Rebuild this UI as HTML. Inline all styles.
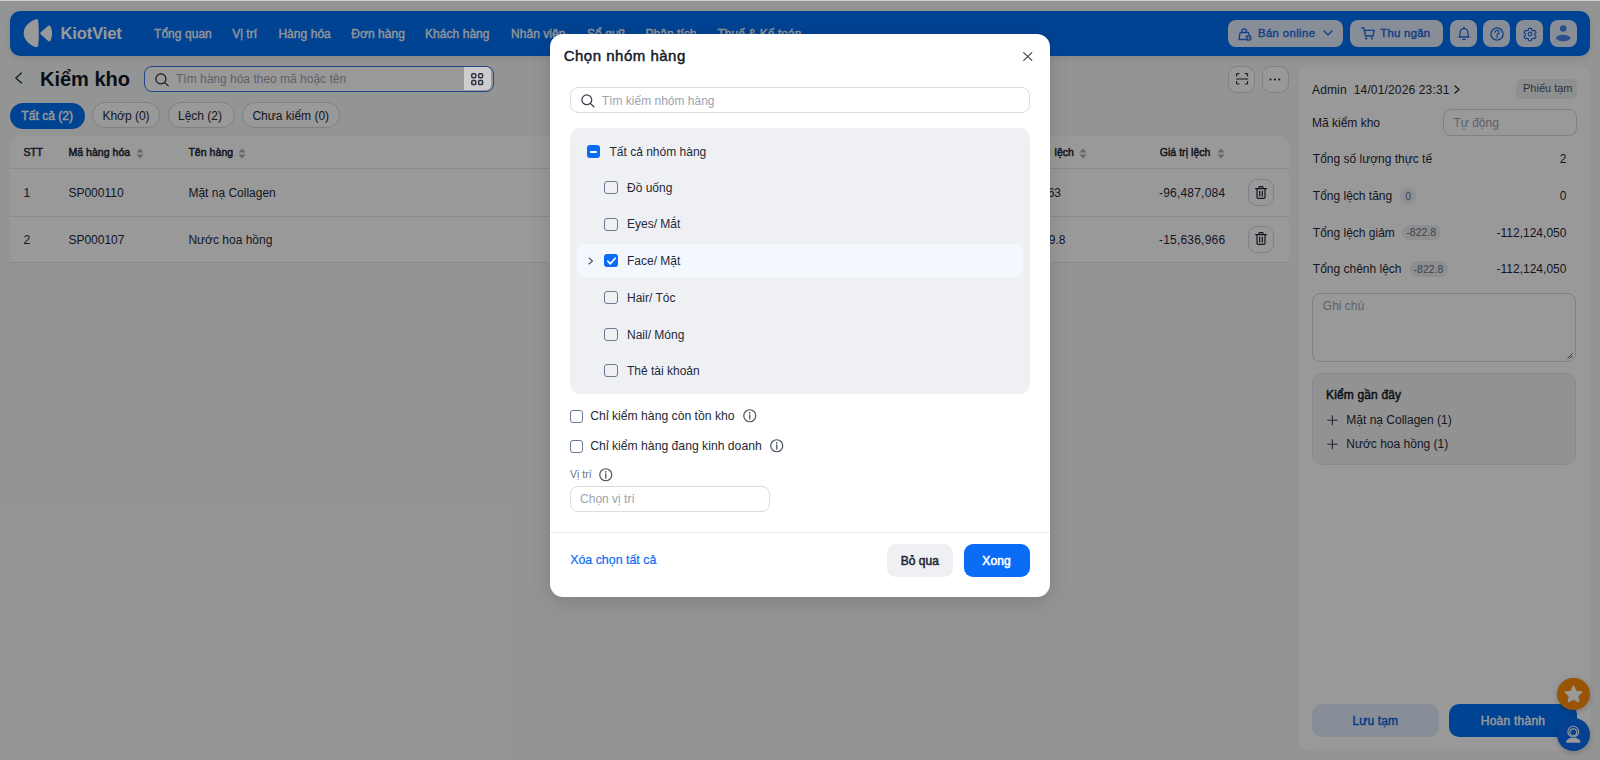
<!DOCTYPE html>
<html><head><meta charset="utf-8">
<style>
*{box-sizing:border-box;margin:0;padding:0}
html,body{width:1600px;height:760px;overflow:hidden}
body{position:relative;background:#f6f8f7;font-family:"Liberation Sans",sans-serif;color:#1f2937}
.a{position:absolute}
.t{position:absolute;white-space:nowrap;line-height:1}
svg{display:block;overflow:visible}
</style></head><body>
<div class="a" style="left:10px;top:10.5px;width:1580px;height:45px;border-radius:10px;background:#0071f5;box-shadow:0 2px 8px rgba(0,0,0,.10)"></div>
<svg class="a" style="left:22px;top:18px" width="32" height="32" viewBox="0 0 32 32"><path d="M14 1.3 C15.3 1.0 15.9 1.6 16.1 2.6 C16.6 6.5 16.8 11 16.8 15.2 C16.8 19.4 16.6 23.9 16.1 27.8 C15.9 28.8 15.3 29.4 14 29.1 C7 27 1.7 21.5 1.7 15.2 C1.7 8.9 7 3.4 14 1.3 Z" fill="#fff"/><path d="M18.6 14.6 L26.2 7.8 C26.9 7.2 27.8 7.3 28.3 8.0 C29.5 10.1 30 12.7 30 15.4 C30 18.1 29.5 20.7 28.3 22.8 C27.8 23.5 26.9 23.6 26.2 23.0 L18.6 16.2 C18.1 15.8 18.1 15.0 18.6 14.6 Z" fill="#fff"/></svg>
<div class="t" style="left:60.5px;top:25.03px;font-size:16.5px;font-weight:bold;color:#fff;letter-spacing:-0.1px">KiotViet</div>
<div class="t" style="left:154px;top:27.84px;font-size:12px;font-weight:normal;color:rgba(255,255,255,.93);letter-spacing:0.05px;-webkit-text-stroke-width:0.4px">Tổng quan</div>
<div class="t" style="left:232.2px;top:27.84px;font-size:12px;font-weight:normal;color:rgba(255,255,255,.93);letter-spacing:0.05px;-webkit-text-stroke-width:0.4px">Vị trí</div>
<div class="t" style="left:278.4px;top:27.84px;font-size:12px;font-weight:normal;color:rgba(255,255,255,.93);letter-spacing:0.05px;-webkit-text-stroke-width:0.4px">Hàng hóa</div>
<div class="t" style="left:351.3px;top:27.84px;font-size:12px;font-weight:normal;color:rgba(255,255,255,.93);letter-spacing:0.05px;-webkit-text-stroke-width:0.4px">Đơn hàng</div>
<div class="t" style="left:425px;top:27.84px;font-size:12px;font-weight:normal;color:rgba(255,255,255,.93);letter-spacing:0.05px;-webkit-text-stroke-width:0.4px">Khách hàng</div>
<div class="t" style="left:511px;top:27.84px;font-size:12px;font-weight:normal;color:rgba(255,255,255,.93);letter-spacing:0.05px;-webkit-text-stroke-width:0.4px">Nhân viên</div>
<div class="t" style="left:587px;top:27.84px;font-size:12px;font-weight:normal;color:rgba(255,255,255,.93);letter-spacing:0.05px;-webkit-text-stroke-width:0.4px">Sổ quỹ</div>
<div class="t" style="left:645.4px;top:27.84px;font-size:12px;font-weight:normal;color:rgba(255,255,255,.93);letter-spacing:0.05px;-webkit-text-stroke-width:0.4px">Phân tích</div>
<div class="t" style="left:717.4px;top:27.84px;font-size:12px;font-weight:normal;color:rgba(255,255,255,.93);letter-spacing:0.05px;-webkit-text-stroke-width:0.4px">Thuế &amp; Kế toán</div>
<div class="a" style="left:1228px;top:20.2px;width:115px;height:26.8px;border-radius:8px;background:#e3edfc"></div>
<div class="a" style="left:1350px;top:20.2px;width:93px;height:26.8px;border-radius:8px;background:#e3edfc"></div>
<div class="a" style="left:1450px;top:20.2px;width:26.8px;height:26.8px;border-radius:8px;background:#e3edfc"></div>
<div class="a" style="left:1483px;top:20.2px;width:26.8px;height:26.8px;border-radius:8px;background:#e3edfc"></div>
<div class="a" style="left:1516.4px;top:20.2px;width:26.8px;height:26.8px;border-radius:8px;background:#e3edfc"></div>
<div class="a" style="left:1550px;top:20.2px;width:26.8px;height:26.8px;border-radius:8px;background:#e3edfc"></div>
<svg class="a" style="left:1238px;top:27px" width="14" height="14" viewBox="0 0 14 14"><path d="M2 5.5 h8.5 l0.7 3.2 M2 5.5 l-0.9 7 h6.5" fill="none" stroke="#2168e0" stroke-width="1.3" stroke-linejoin="round"/><path d="M4 5.5 v-1.5 a2.2 2.2 0 0 1 4.4 0 v1.5" fill="none" stroke="#2168e0" stroke-width="1.3"/><circle cx="10.5" cy="11" r="3" fill="#2168e0"/><path d="M8 11h5M10.5 8.5v5" stroke="#e3edfc" stroke-width="0.7"/></svg>
<div class="t" style="left:1258px;top:28.03px;font-size:11.3px;font-weight:normal;color:#2168e0;letter-spacing:0.4px;-webkit-text-stroke:0.4px #2168e0">Bán online</div>
<svg class="a" style="left:1322.5px;top:30px" width="10" height="6" viewBox="0 0 10 6"><path d="M1 1 L5 5 L9 1" fill="none" stroke="#2168e0" stroke-width="1.4" stroke-linecap="round" stroke-linejoin="round"/></svg>
<svg class="a" style="left:1361px;top:27px" width="14" height="13" viewBox="0 0 14 13"><path d="M0.8 1 H2.8 L4.6 9 H12 L13.2 3.3 H3.4" fill="none" stroke="#2168e0" stroke-width="1.3" stroke-linejoin="round" stroke-linecap="round"/><circle cx="5.2" cy="11.6" r="1.1" fill="#2168e0"/><circle cx="11" cy="11.6" r="1.1" fill="#2168e0"/></svg>
<div class="t" style="left:1380.3px;top:28.03px;font-size:11.3px;font-weight:normal;color:#2168e0;letter-spacing:0.3px;-webkit-text-stroke:0.4px #2168e0">Thu ngân</div>
<svg class="a" style="left:1456.5px;top:26px" width="14" height="15" viewBox="0 0 14 15"><path d="M2.2 11 C3 10 3.2 8.5 3.2 6.5 A3.8 3.8 0 0 1 10.8 6.5 C10.8 8.5 11 10 11.8 11 Z" fill="none" stroke="#2168e0" stroke-width="1.3" stroke-linejoin="round"/><path d="M7 1.2 v1.3 M5.6 13.3 h2.8" stroke="#2168e0" stroke-width="1.3" stroke-linecap="round"/></svg>
<svg class="a" style="left:1489.5px;top:26.7px" width="14" height="14" viewBox="0 0 14 14"><circle cx="7" cy="7" r="6.1" fill="none" stroke="#2168e0" stroke-width="1.3"/><path d="M5 5.3 A2 2 0 1 1 7.6 7.2 C7.1 7.5 7 7.9 7 8.6" fill="none" stroke="#2168e0" stroke-width="1.3" stroke-linecap="round"/><circle cx="7" cy="10.4" r="0.8" fill="#2168e0"/></svg>
<svg class="a" style="left:1523.3px;top:26.6px" width="14" height="14" viewBox="0 0 14 14"><g transform="translate(7 7) scale(0.92) translate(-7 -7)"><path d="M5.6 0.9 h2.8 l0.4 1.8 l1.6 0.9 l1.8 -0.6 l1.4 2.4 l-1.4 1.3 v1.8 l1.4 1.3 l-1.4 2.4 l-1.8 -0.6 l-1.6 0.9 l-0.4 1.8 h-2.8 l-0.4 -1.8 l-1.6 -0.9 l-1.8 0.6 l-1.4 -2.4 l1.4 -1.3 v-1.8 l-1.4 -1.3 l1.4 -2.4 l1.8 0.6 l1.6 -0.9 Z" fill="none" stroke="#2168e0" stroke-width="1.25" stroke-linejoin="round"/><circle cx="7" cy="7" r="2" fill="none" stroke="#2168e0" stroke-width="1.25"/></g></svg>
<svg class="a" style="left:1554px;top:24px" width="18" height="18" viewBox="0 0 18 18"><circle cx="9.2" cy="4.5" r="3.3" fill="#4a88e6"/><ellipse cx="9.2" cy="14" rx="7.2" ry="3.3" fill="#4a88e6"/></svg>
<svg class="a" style="left:14px;top:72px" width="9" height="12" viewBox="0 0 9 12"><path d="M7.5 1 L1.8 6 L7.5 11" fill="none" stroke="#1f2937" stroke-width="1.2" stroke-linecap="round" stroke-linejoin="round"/></svg>
<div class="t" style="left:40px;top:68.67px;font-size:20px;font-weight:bold;color:#111827;">Kiểm kho</div>
<div class="a" style="left:144.3px;top:66.3px;width:349.4px;height:26px;border:1.3px solid #3477ea;border-radius:8px;background:#fff;overflow:hidden"></div>
<svg class="a" style="left:155px;top:72.8px" width="14" height="13" viewBox="0 0 14 13"><circle cx="5.9" cy="5.9" r="5" fill="none" stroke="#1f2937" stroke-width="1.2"/><path d="M9.6 9.6 L13.2 12.6" stroke="#1f2937" stroke-width="1.2" stroke-linecap="round"/></svg>
<div class="t" style="left:176px;top:73.34px;font-size:12px;font-weight:normal;color:#9ca3af;">Tìm hàng hóa theo mã hoặc tên</div>
<div class="a" style="left:10px;top:102.5px;width:75px;height:26.3px;border-radius:13px;background:#0071f5"></div>
<div class="t" style="left:21.3px;top:109.64px;font-size:12px;font-weight:normal;color:#fff;letter-spacing:0.05px;-webkit-text-stroke-width:0.4px">Tất cả (2)</div>
<div class="a" style="left:92px;top:102.3px;width:68px;height:26.1px;border-radius:13px;border:1px solid #d5d8dc;background:#fff"></div>
<div class="t" style="left:102.4px;top:109.84px;font-size:12px;font-weight:normal;color:#1f2937;">Khớp (0)</div>
<div class="a" style="left:167.5px;top:102.3px;width:67px;height:26.1px;border-radius:13px;border:1px solid #d5d8dc;background:#fff"></div>
<div class="t" style="left:178px;top:109.84px;font-size:12px;font-weight:normal;color:#1f2937;">Lệch (2)</div>
<div class="a" style="left:242px;top:102.3px;width:98.3px;height:26.1px;border-radius:13px;border:1px solid #d5d8dc;background:#fff"></div>
<div class="t" style="left:252.4px;top:109.84px;font-size:12px;font-weight:normal;color:#1f2937;">Chưa kiểm (0)</div>
<div class="a" style="left:1228px;top:66px;width:27px;height:26.5px;border:1px solid #d5d8dc;border-radius:9px;background:#fff"></div>
<div class="a" style="left:1262px;top:66px;width:26.5px;height:26.5px;border:1px solid #d5d8dc;border-radius:9px;background:#fff"></div>
<svg class="a" style="left:1235.5px;top:73.2px" width="13" height="12" viewBox="0 0 13 12"><path d="M0.6 3 V1.4 a0.8 0.8 0 0 1 .8 -.8 H3 M9.2 0.6 H10.8 a0.8 0.8 0 0 1 .8 .8 V3 M11.6 8.6 V10.2 a0.8 0.8 0 0 1 -.8 .8 H9.2 M3 11 H1.4 a0.8 0.8 0 0 1 -.8 -.8 V8.6 M0.6 6 H11.6" fill="none" stroke="#1f2937" stroke-width="1.1" stroke-linecap="round"/></svg>
<svg class="a" style="left:1269px;top:77.7px" width="13" height="3" viewBox="0 0 13 3"><circle cx="1.5" cy="1.5" r="1.05" fill="#1f2937"/><circle cx="6" cy="1.5" r="1.05" fill="#1f2937"/><circle cx="10.3" cy="1.5" r="1.05" fill="#1f2937"/></svg>
<div class="a" style="left:10px;top:136px;width:1278.5px;height:126.6px;background:#fff;border-radius:10px 10px 0 0"></div>
<div class="a" style="left:10px;top:168px;width:1278.5px;height:1px;background:#e5e7eb"></div>
<div class="a" style="left:10px;top:216.2px;width:1278.5px;height:1px;background:#e5e7eb"></div>
<div class="a" style="left:10px;top:262px;width:1278.5px;height:1px;background:#e5e7eb"></div>
<div class="t" style="left:23.4px;top:147.41px;font-size:10.5px;font-weight:normal;color:#1f2937;letter-spacing:-0.1px;-webkit-text-stroke-width:0.5px">STT</div>
<div class="t" style="left:68.4px;top:147.41px;font-size:10.5px;font-weight:normal;color:#1f2937;letter-spacing:0.05px;-webkit-text-stroke-width:0.5px">Mã hàng hóa</div>
<svg class="a" style="left:136px;top:147.5px" width="8" height="11" viewBox="0 0 8 11"><path d="M4 0.5 L7.5 4.5 H0.5Z M4 10.5 L7.5 6.5 H0.5Z" fill="#a3a9b3"/></svg>
<div class="t" style="left:188.4px;top:147.41px;font-size:10.5px;font-weight:normal;color:#1f2937;letter-spacing:0.05px;-webkit-text-stroke-width:0.5px">Tên hàng</div>
<svg class="a" style="left:238px;top:147.5px" width="8" height="11" viewBox="0 0 8 11"><path d="M4 0.5 L7.5 4.5 H0.5Z M4 10.5 L7.5 6.5 H0.5Z" fill="#a3a9b3"/></svg>
<div class="t" style="right:526px;top:147.41px;font-size:10.5px;font-weight:normal;color:#1f2937;letter-spacing:0.05px;-webkit-text-stroke-width:0.5px">lệch</div>
<svg class="a" style="left:1078.5px;top:147.5px" width="8" height="11" viewBox="0 0 8 11"><path d="M4 0.5 L7.5 4.5 H0.5Z M4 10.5 L7.5 6.5 H0.5Z" fill="#a3a9b3"/></svg>
<div class="t" style="left:1159.7px;top:147.41px;font-size:10.5px;font-weight:normal;color:#1f2937;letter-spacing:0.05px;-webkit-text-stroke-width:0.5px">Giá trị lệch</div>
<svg class="a" style="left:1217px;top:147.5px" width="8" height="11" viewBox="0 0 8 11"><path d="M4 0.5 L7.5 4.5 H0.5Z M4 10.5 L7.5 6.5 H0.5Z" fill="#a3a9b3"/></svg>
<div class="t" style="left:23.4px;top:187.34px;font-size:12px;font-weight:normal;color:#1f2937;">1</div>
<div class="t" style="left:68.4px;top:187.34px;font-size:12px;font-weight:normal;color:#1f2937;">SP000110</div>
<div class="t" style="left:188.4px;top:187.34px;font-size:12px;font-weight:normal;color:#1f2937;">Mặt nạ Collagen</div>
<div class="t" style="right:539px;top:187.34px;font-size:12px;font-weight:normal;color:#1f2937;">-63</div>
<div class="t" style="left:1159px;top:187.34px;font-size:12px;font-weight:normal;color:#1f2937;letter-spacing:0.2px">-96,487,084</div>
<div class="a" style="left:1247.6px;top:179px;width:26.5px;height:27px;border:1px solid #d5d8dc;border-radius:9px;background:#fff"></div>
<svg class="a" style="left:1254.8px;top:185.8px" width="12" height="13" viewBox="0 0 12 13"><path d="M0.6 2.7 H11.4 M4 2.5 V1.2 a0.6 0.6 0 0 1 .6 -.6 H7.4 a0.6 0.6 0 0 1 .6 .6 V2.5 M2 2.9 V11.3 a1.1 1.1 0 0 0 1.1 1.1 H8.9 a1.1 1.1 0 0 0 1.1 -1.1 V2.9 M4.7 5.2 V10.1 M7.3 5.2 V10.1" fill="none" stroke="#1f2937" stroke-width="1.2" stroke-linecap="round" stroke-linejoin="round"/></svg>
<div class="t" style="left:23.4px;top:234.24px;font-size:12px;font-weight:normal;color:#1f2937;">2</div>
<div class="t" style="left:68.4px;top:234.24px;font-size:12px;font-weight:normal;color:#1f2937;">SP000107</div>
<div class="t" style="left:188.4px;top:234.24px;font-size:12px;font-weight:normal;color:#1f2937;">Nước hoa hồng</div>
<div class="t" style="right:534.5px;top:234.24px;font-size:12px;font-weight:normal;color:#1f2937;">-19.8</div>
<div class="t" style="left:1159px;top:234.24px;font-size:12px;font-weight:normal;color:#1f2937;letter-spacing:0.2px">-15,636,966</div>
<div class="a" style="left:1247.6px;top:225.5px;width:26.5px;height:27px;border:1px solid #d5d8dc;border-radius:9px;background:#fff"></div>
<svg class="a" style="left:1254.8px;top:232.3px" width="12" height="13" viewBox="0 0 12 13"><path d="M0.6 2.7 H11.4 M4 2.5 V1.2 a0.6 0.6 0 0 1 .6 -.6 H7.4 a0.6 0.6 0 0 1 .6 .6 V2.5 M2 2.9 V11.3 a1.1 1.1 0 0 0 1.1 1.1 H8.9 a1.1 1.1 0 0 0 1.1 -1.1 V2.9 M4.7 5.2 V10.1 M7.3 5.2 V10.1" fill="none" stroke="#1f2937" stroke-width="1.2" stroke-linecap="round" stroke-linejoin="round"/></svg>
<div class="a" style="left:1298.5px;top:65px;width:291.5px;height:686px;background:#fff;border-radius:12px"></div>
<div class="t" style="left:1312px;top:84.04px;font-size:12px;font-weight:normal;color:#1f2937;letter-spacing:0.15px">Admin&nbsp;&nbsp;14/01/2026 23:31</div>
<svg class="a" style="left:1454px;top:85.2px" width="6" height="9" viewBox="0 0 6 9"><path d="M1 1 L5 4.5 L1 8" fill="none" stroke="#1f2937" stroke-width="1.3" stroke-linecap="round" stroke-linejoin="round"/></svg>
<div class="a" style="left:1516px;top:79px;width:60.6px;height:19.5px;background:#eceef1;border-radius:6px"></div>
<div class="t" style="left:1523px;top:82.99px;font-size:11px;font-weight:normal;color:#4b5563;">Phiếu tạm</div>
<div class="t" style="left:1312px;top:117.04px;font-size:12px;font-weight:normal;color:#1f2937;">Mã kiểm kho</div>
<div class="a" style="left:1443px;top:109px;width:133.6px;height:26.6px;border:1px solid #d5d8dc;border-radius:8px"></div>
<div class="t" style="left:1453.5px;top:117.04px;font-size:12px;font-weight:normal;color:#9ca3af;">Tự động</div>
<div class="t" style="left:1312.8px;top:153.44px;font-size:12px;font-weight:normal;color:#1f2937;">Tổng số lượng thực tế</div>
<div class="t" style="right:33.59999999999991px;top:153.44px;font-size:12px;font-weight:normal;color:#1f2937;">2</div>
<div class="t" style="left:1312.8px;top:190.34px;font-size:12px;font-weight:normal;color:#1f2937;">Tổng lệch tăng</div>
<div class="t" style="right:33.59999999999991px;top:190.34px;font-size:12px;font-weight:normal;color:#1f2937;">0</div>
<div class="a" style="left:1400px;top:188.29999999999998px;width:16.4px;height:15.8px;background:#eceef1;border-radius:8px"></div>
<div class="t" style="left:1208.2px;width:400px;text-align:center;top:191.11px;font-size:10.5px;font-weight:normal;color:#6b7280;">0</div>
<div class="t" style="left:1312.8px;top:226.54px;font-size:12px;font-weight:normal;color:#1f2937;">Tổng lệch giảm</div>
<div class="t" style="right:33.59999999999991px;top:226.54px;font-size:12px;font-weight:normal;color:#1f2937;">-112,124,050</div>
<div class="a" style="left:1402px;top:224.5px;width:38.5px;height:15.8px;background:#eceef1;border-radius:8px"></div>
<div class="t" style="left:1221.25px;width:400px;text-align:center;top:227.31px;font-size:10.5px;font-weight:normal;color:#6b7280;">-822.8</div>
<div class="t" style="left:1312.8px;top:263.44px;font-size:12px;font-weight:normal;color:#1f2937;">Tổng chênh lệch</div>
<div class="t" style="right:33.59999999999991px;top:263.44px;font-size:12px;font-weight:normal;color:#1f2937;">-112,124,050</div>
<div class="a" style="left:1409.5px;top:261.40000000000003px;width:38px;height:15.8px;background:#eceef1;border-radius:8px"></div>
<div class="t" style="left:1228.5px;width:400px;text-align:center;top:264.21px;font-size:10.5px;font-weight:normal;color:#6b7280;">-822.8</div>
<div class="a" style="left:1312.3px;top:292.6px;width:264.1px;height:69.4px;border:1px solid #d5d8dc;border-radius:8px"></div>
<div class="t" style="left:1322.8px;top:300.34px;font-size:12px;font-weight:normal;color:#9ca3af;">Ghi chú</div>
<svg class="a" style="left:1567px;top:353px" width="6" height="6" viewBox="0 0 6 6"><path d="M5.5 0.5 L0.5 5.5 M5.5 3 L3 5.5" stroke="#374151" stroke-width="0.9"/></svg>
<div class="a" style="left:1312.3px;top:372.8px;width:264.1px;height:92.5px;border:1px solid #e3e5e8;border-radius:10px;background:#f3f4f6"></div>
<div class="t" style="left:1326px;top:389.24px;font-size:12px;font-weight:normal;color:#111827;letter-spacing:0.15px;-webkit-text-stroke-width:0.45px">Kiểm gần đây</div>
<svg class="a" style="left:1327px;top:415px" width="11" height="11" viewBox="0 0 11 11"><path d="M5.4 0.3 V10.3 M0.3 5.3 H10.5" stroke="#374151" stroke-width="1.1"/></svg>
<div class="t" style="left:1346.3px;top:414.14px;font-size:12px;font-weight:normal;color:#1f2937;">Mặt nạ Collagen (1)</div>
<svg class="a" style="left:1327px;top:438.5px" width="11" height="11" viewBox="0 0 11 11"><path d="M5.4 0.3 V10.3 M0.3 5.3 H10.5" stroke="#374151" stroke-width="1.1"/></svg>
<div class="t" style="left:1346.3px;top:437.64px;font-size:12px;font-weight:normal;color:#1f2937;">Nước hoa hồng (1)</div>
<div class="a" style="left:1311.6px;top:703.8px;width:127.4px;height:33.5px;background:#e1edfe;border-radius:10px"></div>
<div class="t" style="left:1175.3px;width:400px;text-align:center;top:714.84px;font-size:12px;font-weight:normal;color:#0a5fd8;letter-spacing:0.1px;-webkit-text-stroke-width:0.4px">Lưu tạm</div>
<div class="a" style="left:1449px;top:703.8px;width:128px;height:33.5px;background:#0071f5;border-radius:10px"></div>
<div class="t" style="left:1313px;width:400px;text-align:center;top:714.84px;font-size:12px;font-weight:normal;color:#fff;letter-spacing:0.25px;-webkit-text-stroke-width:0.4px">Hoàn thành</div>
<div class="a" style="left:1556.9px;top:677.6px;width:32.8px;height:32.8px;background:#ff8c05;border-radius:50%;box-shadow:0 2px 6px rgba(0,0,0,.2)"></div>
<svg class="a" style="left:1564px;top:685px" width="19" height="18" viewBox="0 0 19 18"><path d="M9.5 1.5 L11.9 6.6 L17.4 7.2 L13.3 10.9 L14.4 16.3 L9.5 13.6 L4.6 16.3 L5.7 10.9 L1.6 7.2 L7.1 6.6 Z" fill="#fff" stroke="#fff" stroke-width="1.9" stroke-linejoin="round"/></svg>
<div class="a" style="left:1556.9px;top:717.9px;width:32.8px;height:32.8px;background:#0a6cf0;border-radius:50%;box-shadow:0 2px 6px rgba(0,0,0,.2)"></div>
<svg class="a" style="left:1564px;top:723.5px" width="18" height="20" viewBox="0 0 18 20"><circle cx="9.3" cy="7.6" r="5.4" fill="none" stroke="#fff" stroke-width="1.1"/><circle cx="9.3" cy="8.3" r="3.4" fill="none" stroke="#fff" stroke-width="1.1"/><path d="M12.5 10.8 L9.8 12" stroke="#fff" stroke-width="1.1" stroke-linecap="round"/><path d="M2.2 18.8 C2.2 15.5 5 13.8 9.3 13.8 C13.6 13.8 16.4 15.5 16.4 18.8 Z" fill="#fff"/></svg>
<div class="a" style="left:0;top:0;width:1600px;height:760px;background:rgba(0,0,0,.4)"></div>
<div class="a" style="left:0px;top:0px;width:1600px;height:1px;background:#d0d1d1"></div>
<div class="a" style="left:464.2px;top:67px;width:27px;height:23px;background:#cdcdcd;border-radius:0 5px 5px 0"></div>
<svg class="a" style="left:471px;top:73px" width="13" height="12" viewBox="0 0 13 12"><rect x="0.75" y="0.75" width="4" height="3.9" rx="1.1" fill="none" stroke="#2d3440" stroke-width="1.5"/><rect x="7.6" y="0.75" width="4" height="3.9" rx="1.1" fill="none" stroke="#2d3440" stroke-width="1.5"/><rect x="0.75" y="7.6" width="4" height="3.9" rx="1.1" fill="none" stroke="#2d3440" stroke-width="1.5"/><rect x="7.6" y="7.6" width="4" height="3.9" rx="1.1" fill="none" stroke="#2d3440" stroke-width="1.5"/></svg>
<div class="a" style="left:550px;top:34px;width:500px;height:563px;background:#fff;border-radius:13px;box-shadow:0 4px 20px rgba(0,0,0,.15)"></div>
<div class="t" style="left:563.7px;top:48.10px;font-size:15px;font-weight:normal;color:#111827;letter-spacing:0.5px;-webkit-text-stroke:0.45px #111827">Chọn nhóm hàng</div>
<svg class="a" style="left:1023px;top:51.8px" width="9.5" height="9" viewBox="0 0 9.5 9"><path d="M0.7 0.7 L8.8 8.3 M8.8 0.7 L0.7 8.3" stroke="#374151" stroke-width="1.15" stroke-linecap="round"/></svg>
<div class="a" style="left:570.3px;top:87.2px;width:459.5px;height:26.2px;border:1px solid #d8dce2;border-radius:8px"></div>
<svg class="a" style="left:581px;top:94px" width="14" height="14" viewBox="0 0 14 14"><circle cx="5.8" cy="5.8" r="4.9" fill="none" stroke="#374151" stroke-width="1.3"/><path d="M9.4 9.4 L12.8 12.8" stroke="#374151" stroke-width="1.3" stroke-linecap="round"/></svg>
<div class="t" style="left:601.8px;top:94.84px;font-size:12px;font-weight:normal;color:#9ca3af;">Tìm kiếm nhóm hàng</div>
<div class="a" style="left:570.1px;top:127.5px;width:459.9px;height:266px;background:#eff0f3;border-radius:10px"></div>
<div class="a" style="left:576.8px;top:244.2px;width:446.5px;height:32.6px;background:#f3f7fe;border-radius:8px"></div>
<div class="a" style="left:587px;top:145.0px;width:13.4px;height:13.4px;background:#0a6cf5;border-radius:3px"></div>
<div class="a" style="left:590.4px;top:151.1px;width:6.6px;height:1.8px;background:#fff;border-radius:1px"></div>
<div class="t" style="left:609.5px;top:145.64px;font-size:12px;font-weight:normal;color:#1f2937;">Tất cả nhóm hàng</div>
<div class="a" style="left:604.2px;top:181.0px;width:13.4px;height:13px;border:1.2px solid #6b7a90;border-radius:3px"></div>
<div class="t" style="left:627px;top:181.64px;font-size:12px;font-weight:normal;color:#1f2937;">Đồ uống</div>
<div class="a" style="left:604.2px;top:217.5px;width:13.4px;height:13px;border:1.2px solid #6b7a90;border-radius:3px"></div>
<div class="t" style="left:627px;top:218.14px;font-size:12px;font-weight:normal;color:#1f2937;">Eyes/ Mắt</div>
<div class="a" style="left:604.2px;top:254.10000000000002px;width:13.4px;height:13px;background:#0a6cf5;border-radius:3px"></div>
<svg class="a" style="left:606.7px;top:256.6px" width="9" height="8" viewBox="0 0 9 8"><path d="M0.8 4.2 L3.4 6.8 L8.2 1.2" fill="none" stroke="#fff" stroke-width="1.7" stroke-linecap="round" stroke-linejoin="round"/></svg>
<div class="t" style="left:627px;top:254.74px;font-size:12px;font-weight:normal;color:#1f2937;">Face/ Mặt</div>
<div class="a" style="left:604.2px;top:291.4px;width:13.4px;height:13px;border:1.2px solid #6b7a90;border-radius:3px"></div>
<div class="t" style="left:627px;top:292.04px;font-size:12px;font-weight:normal;color:#1f2937;">Hair/ Tóc</div>
<div class="a" style="left:604.2px;top:328.0px;width:13.4px;height:13px;border:1.2px solid #6b7a90;border-radius:3px"></div>
<div class="t" style="left:627px;top:328.64px;font-size:12px;font-weight:normal;color:#1f2937;">Nail/ Móng</div>
<div class="a" style="left:604.2px;top:364.4px;width:13.4px;height:13px;border:1.2px solid #6b7a90;border-radius:3px"></div>
<div class="t" style="left:627px;top:365.04px;font-size:12px;font-weight:normal;color:#1f2937;">Thẻ tài khoản</div>
<svg class="a" style="left:588.4px;top:257px" width="6" height="8" viewBox="0 0 6 8"><path d="M1 1 L4.5 4 L1 7" fill="none" stroke="#4b5563" stroke-width="1.1" stroke-linecap="round" stroke-linejoin="round"/></svg>
<div class="a" style="left:570px;top:409.5px;width:13.2px;height:13px;border:1.2px solid #6b7a90;border-radius:3px;background:#fff"></div>
<div class="t" style="left:590.3px;top:409.97px;font-size:12.2px;font-weight:normal;color:#1f2937;">Chỉ kiểm hàng còn tồn kho</div>
<svg class="a" style="left:743px;top:409.4px" width="13.5" height="13.5" viewBox="0 0 13.5 13.5"><circle cx="6.75" cy="6.75" r="6" fill="none" stroke="#4b5563" stroke-width="1.2"/><path d="M6.75 6 V10" stroke="#4b5563" stroke-width="1.3" stroke-linecap="round"/><circle cx="6.75" cy="3.9" r="0.8" fill="#4b5563"/></svg>
<div class="a" style="left:570px;top:439.5px;width:13.2px;height:13px;border:1.2px solid #6b7a90;border-radius:3px;background:#fff"></div>
<div class="t" style="left:590.3px;top:439.97px;font-size:12.2px;font-weight:normal;color:#1f2937;">Chỉ kiểm hàng đang kinh doanh</div>
<svg class="a" style="left:769.7px;top:439.4px" width="13.5" height="13.5" viewBox="0 0 13.5 13.5"><circle cx="6.75" cy="6.75" r="6" fill="none" stroke="#4b5563" stroke-width="1.2"/><path d="M6.75 6 V10" stroke="#4b5563" stroke-width="1.3" stroke-linecap="round"/><circle cx="6.75" cy="3.9" r="0.8" fill="#4b5563"/></svg>
<div class="t" style="left:570px;top:469.01px;font-size:10.5px;font-weight:normal;color:#6b7280;">Vị trí</div>
<svg class="a" style="left:598.6px;top:467.8px" width="13.5" height="13.5" viewBox="0 0 13.5 13.5"><circle cx="6.75" cy="6.75" r="6" fill="none" stroke="#4b5563" stroke-width="1.2"/><path d="M6.75 6 V10" stroke="#4b5563" stroke-width="1.3" stroke-linecap="round"/><circle cx="6.75" cy="3.9" r="0.8" fill="#4b5563"/></svg>
<div class="a" style="left:570px;top:486.4px;width:199.7px;height:26px;border:1px solid #d8dce2;border-radius:8px"></div>
<div class="t" style="left:580.1px;top:493.34px;font-size:12px;font-weight:normal;color:#9ca3af;">Chọn vị trí</div>
<div class="a" style="left:550px;top:532px;width:500px;height:1px;background:#e8eaed"></div>
<div class="t" style="left:570.2px;top:553.70px;font-size:12.4px;font-weight:normal;color:#0a6cf5;-webkit-text-stroke:0.2px #0a6cf5">Xóa chọn tất cả</div>
<div class="a" style="left:887px;top:543.5px;width:65.8px;height:33.3px;background:#eff0f3;border-radius:9px"></div>
<div class="t" style="left:719.9px;width:400px;text-align:center;top:554.64px;font-size:12px;font-weight:normal;color:#1f2937;letter-spacing:0px;-webkit-text-stroke-width:0.55px">Bỏ qua</div>
<div class="a" style="left:963.5px;top:543.5px;width:66.3px;height:33.3px;background:#0a6cf5;border-radius:9px"></div>
<div class="t" style="left:796.6px;width:400px;text-align:center;top:554.64px;font-size:12px;font-weight:normal;color:#fff;letter-spacing:0.2px;-webkit-text-stroke-width:0.55px">Xong</div>
</body></html>
